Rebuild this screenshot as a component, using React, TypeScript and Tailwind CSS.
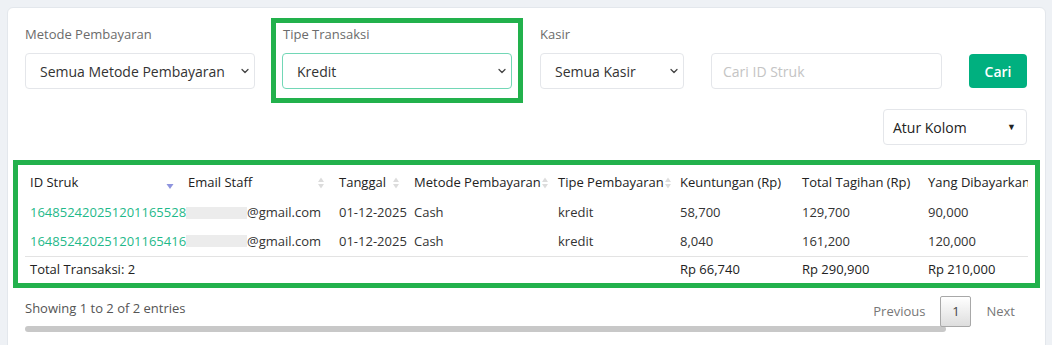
import { ChevronDown } from "lucide-react";

const font = { fontFamily: '"Open Sans", "Liberation Sans", sans-serif' };

const SortIcon = ({ active }: { active?: boolean }) => {
    if (active) {
        return (
            <svg width="8" height="10" viewBox="0 0 8 10" className="shrink-0 mt-[6px]">
                <path d="M0.5 3 L7.5 3 L4 8 Z" fill="#8e94de" />
            </svg>
        );
    }
    return (
        <svg width="8" height="14" viewBox="0 0 8 14" className="shrink-0">
            <path d="M1 6 L7 6 L4 1.5 Z" fill="#dcdcdc" />
            <path d="M1 8 L7 8 L4 12.5 Z" fill="#dcdcdc" />
        </svg>
    );
};

const Select = ({ value, width, active }: { value: string; width: string; active?: boolean }) => {
    return (
        <div
            className={`${width} h-[36px] rounded-[4px] border bg-white flex items-center justify-between pl-[14px] pr-[3px] text-[14px] text-[#333] ${
                active ? "border-[#72d7b6]" : "border-[#e4e6ea]"
            }`}
        >
            <span>{value}</span>
            <ChevronDown size={12} strokeWidth={2.5} color="#444" />
        </div>
    );
};

const headers = [
    { label: "ID Struk", w: "w-[158px]", sort: "active" },
    { label: "Email Staff", w: "w-[151px]", sort: "both" },
    { label: "Tanggal", w: "w-[75px]", sort: "both" },
    { label: "Metode Pembayaran", w: "w-[144px]", sort: "both" },
    { label: "Tipe Pembayaran", w: "w-[122px]", sort: "both" },
    { label: "Keuntungan (Rp)", w: "w-[122px]", sort: "" },
    { label: "Total Tagihan (Rp)", w: "w-[126px]", sort: "" },
    { label: "Yang Dibayarkan (Rp)", w: "w-[150px]", sort: "" },
];

const rows = [
    { id: "164852420251201165528", date: "01-12-2025", metode: "Cash", tipe: "kredit", untung: "58,700", tagihan: "129,700", bayar: "90,000" },
    { id: "164852420251201165416", date: "01-12-2025", metode: "Cash", tipe: "kredit", untung: "8,040", tagihan: "161,200", bayar: "120,000" },
];

export default function App() {
    return (
        <div className="w-[1052px] h-[345px] overflow-hidden bg-[#eef1f5] pt-[7px] pl-[7px] pr-[6px]" style={font}>
            <div className="bg-white rounded-t-[6px] border border-[#e3e7ec] h-[400px] pt-[10px] pl-[17px] pr-[18px]">
                {/* Filters */}
                <div className="flex items-start">
                    <div className="mt-[5px] pt-[1px] w-[230px]">
                        <div className="h-[20px] leading-[20px] text-[13px] text-[#6b6b6b]">Metode Pembayaran</div>
                        <div className="mt-[9px]">
                            <Select value="Semua Metode Pembayaran" width="w-[230px]" />
                        </div>
                    </div>

                    <div className="ml-[16px] border-[5px] border-[#22b14c] pt-[1px] px-[6px] pb-[9px]">
                        <div className="h-[20px] leading-[20px] text-[13px] text-[#6b6b6b] pl-[1px]">Tipe Transaksi</div>
                        <div className="mt-[9px]">
                            <Select value="Kredit" width="w-[230px]" active />
                        </div>
                    </div>

                    <div className="ml-[17px] mt-[5px] pt-[1px]">
                        <div className="h-[20px] leading-[20px] text-[13px] text-[#6b6b6b]">Kasir</div>
                        <div className="mt-[9px]">
                            <Select value="Semua Kasir" width="w-[144px]" />
                        </div>
                    </div>

                    <div className="ml-[27px] mt-[35px] w-[231px] h-[36px] rounded-[4px] border border-[#e4e6ea] flex items-center pl-[11px] text-[14px] text-[#c4c4c4]">
                        Cari ID Struk
                    </div>

                    <button className="ml-[27px] mt-[36px] w-[58px] h-[34px] rounded-[4px] bg-[#00b07f] text-white text-[14px] font-semibold">
                        Cari
                    </button>
                </div>

                {/* Atur Kolom */}
                <div className="flex justify-end mt-[6px]">
                    <div className="w-[144px] h-[36px] rounded-[4px] border border-[#e4e6ea] flex items-center justify-between pl-[9px] pr-[10px] text-[14px] text-[#222]">
                        <span>Atur Kolom</span>
                        <span className="text-[9px] text-[#222]">▼</span>
                    </div>
                </div>

                {/* Table */}
                <div className="ml-[-12px] mr-[-13px] mt-[15px] border-[5px] border-[#22b14c] pl-[7px] pr-[5px]">
                    <div className="w-[1003px] overflow-hidden">
                        <table className="table-fixed border-collapse w-[1048px] text-[13px]">
                            <thead>
                                <tr className="h-[33px]">
                                    {headers.map((h) => (
                                        <th key={h.label} className={`${h.w} p-0 pl-[5px] pt-[3px] text-left font-normal text-[#222]`}>
                                            <div className="flex items-center justify-between pr-[9px] whitespace-nowrap">
                                                <span>{h.label}</span>
                                                {h.sort === "active" && <SortIcon active />}
                                                {h.sort === "both" && <SortIcon />}
                                            </div>
                                        </th>
                                    ))}
                                </tr>
                            </thead>
                            <tbody>
                                {rows.map((r) => (
                                    <tr key={r.id} className="h-[29px] text-[#333]">
                                        <td className="p-0 pl-[5px] text-[#1fb98a] whitespace-nowrap">{r.id}</td>
                                        <td className="p-0 pl-[3px] whitespace-nowrap">
                                            <div className="flex items-center">
                                                <span className="inline-block w-[61px] h-[12px] bg-[#ececec]" />
                                                <span>@gmail.com</span>
                                            </div>
                                        </td>
                                        <td className="p-0 pl-[5px] whitespace-nowrap">{r.date}</td>
                                        <td className="p-0 pl-[5px]">{r.metode}</td>
                                        <td className="p-0 pl-[5px]">{r.tipe}</td>
                                        <td className="p-0 pl-[5px]">{r.untung}</td>
                                        <td className="p-0 pl-[5px]">{r.tagihan}</td>
                                        <td className="p-0 pl-[5px]">{r.bayar}</td>
                                    </tr>
                                ))}
                                <tr className="h-[27px] border-t border-[#e3e3e3] text-[#222]">
                                    <td className="p-0 pl-[5px] whitespace-nowrap" colSpan={5}>Total Transaksi: 2</td>
                                    <td className="p-0 pl-[5px]">Rp 66,740</td>
                                    <td className="p-0 pl-[5px]">Rp 290,900</td>
                                    <td className="p-0 pl-[5px]">Rp 210,000</td>
                                </tr>
                            </tbody>
                        </table>
                    </div>
                </div>

                {/* Footer */}
                <div className="flex items-start justify-between">
                    <div className="pt-[11px] text-[13px] text-[#555]">Showing 1 to 2 of 2 entries</div>
                    <div className="flex items-center pt-[8px] text-[13px] text-[#777]">
                        <span className="mr-[15px]">Previous</span>
                        <span className="w-[31px] h-[31px] flex items-center justify-center rounded-[2px] border border-[#a8a8a8] bg-gradient-to-b from-white to-[#dedede] text-[#444]">
                            1
                        </span>
                        <span className="ml-[15px] mr-[12px]">Next</span>
                    </div>
                </div>
                <div className="mt-[-1px] w-[921px] h-[6px] rounded-full bg-[#c8c8c8]" />
            </div>
        </div>
    );
}
